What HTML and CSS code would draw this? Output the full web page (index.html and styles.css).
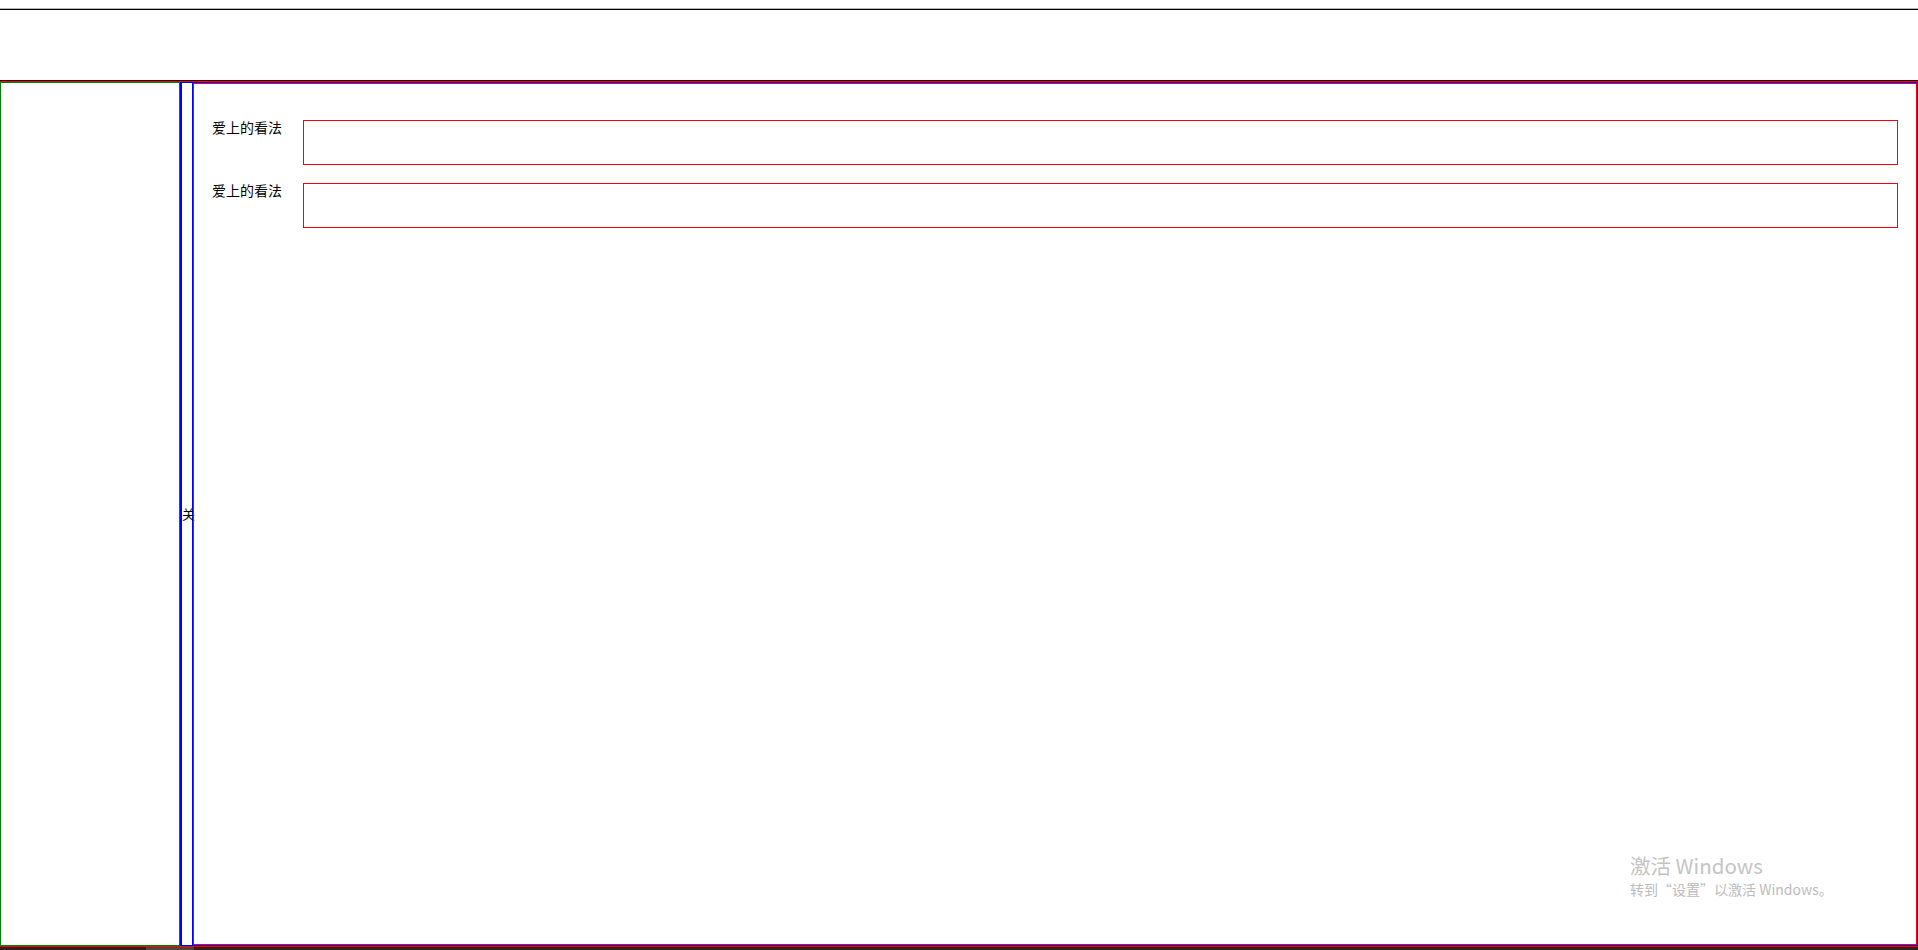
FILE: index.html
```html
<!DOCTYPE html>
<html lang="zh-CN">
<head>
<meta charset="utf-8">
<title>看法</title>
<link rel="stylesheet" href="styles.css">
</head>
<body>
<div class="page-top"></div>
<header class="header"></header>
<div class="layout">
  <aside class="sidebar"></aside>
  <div class="toggle"><span class="toggle-text">关</span></div>
  <main class="main">
    <div class="main-inner">
      <div class="form-row">
        <label class="form-label">爱上的看法</label>
        <input class="form-input" type="text">
      </div>
      <div class="form-row">
        <label class="form-label">爱上的看法</label>
        <input class="form-input" type="text">
      </div>
    </div>
  </main>
</div>
<div class="taskbar"><div class="taskbar-seg"></div></div>
<div class="watermark">
  <div class="wm-title">激活 Windows</div>
  <div class="wm-sub">转到“设置”以激活 Windows。</div>
</div>
</body>
</html>
```
FILE: styles.css
```css
html, body {
  margin: 0;
  padding: 0;
  background: #fff;
  font-family: "Noto Sans CJK SC", "Liberation Sans", sans-serif;
  overflow: hidden;
}
.page-top {
  height: 8px;
  border-bottom: 1px solid #b4b4b4;
}
.header {
  height: 70px;
  border-top: 1px solid #000;
  border-bottom: 1px solid #000;
}
.layout {
  display: flex;
  height: 864px;
  border-top: 1px solid #f00;
  border-bottom: 1px solid #f00;
}
.sidebar {
  box-sizing: border-box;
  width: 180px;
  flex: none;
  border: 1px solid #008000;
}
.toggle {
  box-sizing: border-box;
  width: 13px;
  flex: none;
  border-top: 1px solid #00f;
  border-bottom: 1px solid #00f;
  border-left: 2px solid #00f;
  border-right: 1px solid #00f;
  display: flex;
  align-items: center;
  overflow: visible;
}
.toggle-text {
  font-size: 13px;
  line-height: 14px;
  white-space: nowrap;
  color: #000;
}
.main {
  flex: 1;
  box-sizing: border-box;
  border: 1px solid #f00;
  border-top-color: #00f;
  border-right-color: #00f;
  border-bottom-color: #00f;
  border-left: none;
  display: flex;
}
.main-inner {
  flex: 1;
  border: 1px solid #f00;
  padding: 36px 18px 0 18px;
  display: flex;
  flex-direction: column;
  gap: 18px;
}
.form-row {
  display: flex;
  align-items: flex-start;
}
.form-label {
  width: 91px;
  flex: none;
  font-size: 14px;
  line-height: 15px;
  color: #000;
}
.form-input {
  flex: 1;
  box-sizing: border-box;
  height: 45px;
  margin: 0;
  padding: 0;
  border: 1px solid #f00;
  outline: none;
  background: #fff;
}
.taskbar {
  height: 3px;
  background: #2a221b;
  position: relative;
}
.taskbar-seg {
  position: absolute;
  left: 146px;
  width: 48px;
  top: 0;
  height: 3px;
  background: #4e4740;
}
.watermark {
  position: absolute;
  left: 1630px;
  top: 852px;
  color: #c4c4c4;
  pointer-events: none;
}
.wm-title {
  font-size: 20.5px;
  line-height: 27px;
}
.wm-sub {
  font-size: 14px;
  line-height: 20px;
  color: #bcbcbc;
}
```
